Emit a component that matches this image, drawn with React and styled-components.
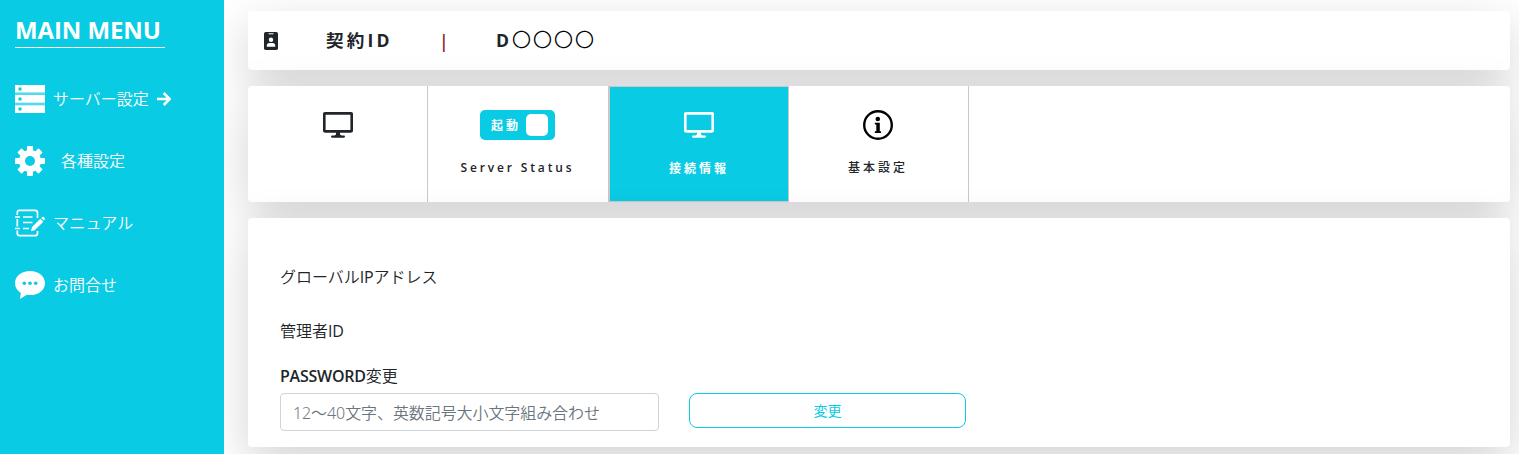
import React from "react";
import styled, { createGlobalStyle } from "styled-components";

const CYAN = "#0acbe4";
const INK = "#212529";

const GlobalStyle = createGlobalStyle`
  *, *::before, *::after { box-sizing: border-box; }
  body {
    margin: 0;
    overflow: hidden;
    background: #fff;
    color: ${INK};
    font: 400 16px/24px "Open Sans", "Noto Sans CJK JP", sans-serif;
  }
  svg { display: block; flex: none; }
`;

const Layout = styled.div`
  display: flex;
  height: 454px;
  overflow: hidden;
`;

const Sidebar = styled.nav`
  flex: none;
  width: 224px;
  padding: 13px 15px 0;
  background: ${CYAN};
  color: #fff;
`;

const MenuTitle = styled.h1`
  width: 150px;
  height: 35px;
  margin: 0 0 20px;
  border-bottom: 1px solid #fff;
  font-size: 24px;
  font-weight: 700;
  line-height: 34px;
  white-space: nowrap;
  letter-spacing: -0.1px;
`;

const MenuItem = styled.a`
  display: flex;
  align-items: center;
  height: 62px;
  white-space: nowrap;
`;

const Label = styled.span`
  display: block;
  font-weight: ${(p) => p.$weight || 350};
  letter-spacing: ${(p) => p.$tracking || 0};
  margin-left: ${(p) => p.$gap || 0};
  white-space: nowrap;
`;

const Latin = styled.span`
  font-weight: 400;
  letter-spacing: -0.2px;
`;

const Arrow = styled.svg`
  margin-left: 8px;
`;

const Main = styled.main`
  flex: 1;
  min-width: 0;
  display: flex;
  flex-direction: column;
  gap: 16px;
  padding: 11px 9px 0 24px;
  overflow: hidden;
`;

const Card = styled.section`
  flex: none;
  background: #fff;
  border-radius: 4px;
  box-shadow: 0 16px 48px rgba(0, 0, 0, 0.175);
`;

const ContractCard = styled(Card)`
  display: flex;
  align-items: center;
  height: 59px;
  padding-left: 16px;
  font-size: 17.6px;
  font-weight: 700;
`;

const ContractLabel = styled.span`
  width: 113px;
  margin: -2px 0 0 48px;
  letter-spacing: 3.2px;
`;

const Divider = styled.span`
  width: 57px;
  color: #8b1a1a;
  font-weight: 600;
`;

const ContractValue = styled.span`
  display: flex;
  align-items: center;
  margin-top: -2px;
  letter-spacing: 2px;
`;

const Rings = styled.span`
  margin: -2px 0 0 1px;
  font-family: "Noto Sans CJK JP", sans-serif;
  font-size: 19px;
  font-weight: 350;
  letter-spacing: 2px;
  color: #000;
`;

const TabsCard = styled(Card)`
  display: flex;
  height: 116px;
`;

const Tab = styled.div`
  display: flex;
  flex-direction: column;
  align-items: center;
  width: ${(p) => p.$width || 180}px;
  padding-top: ${(p) => (p.$active ? 23 : 24)}px;
  padding-right: ${(p) => p.$inset || 0}px;
  border: 0 solid #c8c8c8;
  border-width: ${(p) => (p.$active ? "1px" : "0 1px 0 0")};
  background: ${(p) => (p.$active ? CYAN : "transparent")};
  color: ${(p) => (p.$active ? "#fff" : INK)};
`;

const TabLabel = styled.span`
  margin-top: ${(p) => p.$top || 18}px;
  font-size: 12px;
  font-weight: ${(p) => p.$weight || 700};
  line-height: 20px;
  letter-spacing: ${(p) => p.$tracking || "3px"};
  white-space: nowrap;
`;

const Switch = styled.span`
  display: flex;
  align-items: center;
  justify-content: space-between;
  width: 75px;
  height: 30px;
  padding: 0 7px 0 11px;
  border-radius: 5px;
  background: ${CYAN};
  color: #fff;
  font-size: 12px;
  font-weight: 700;
  letter-spacing: 3px;
`;

const SwitchText = styled.span`
  padding-top: 1px;
`;

const Knob = styled.span`
  width: 22px;
  height: 22px;
  border-radius: 5px;
  background: #fff;
`;

const FormCard = styled(Card)`
  height: 229px;
  padding: 47px 32px 0;
`;

const Field = styled.div`
  height: ${(p) => p.$height}px;
`;

const PasswordLabel = styled.label`
  display: flex;
  height: 29px;
  font-weight: 550;
  letter-spacing: -0.25px;
`;

const Row = styled.div`
  display: flex;
  gap: 30px;
`;

const PasswordInput = styled.input`
  width: 379px;
  height: 38px;
  padding: 7px 12px 5px;
  border: 1px solid #ced4da;
  border-radius: 4px;
  background: #fff;
  font: 350 16px/24px "Noto Sans", "Noto Sans CJK JP", sans-serif;
  letter-spacing: -0.08px;
  &::placeholder { color: #6c757d; opacity: 1; }
`;

const ChangeButton = styled.button`
  width: 277px;
  height: 35px;
  padding: 0;
  border: 1px solid ${CYAN};
  border-radius: 8px;
  background: #fff;
  color: ${CYAN};
  font: 400 14px/20px "Open Sans", "Noto Sans CJK JP", sans-serif;
`;

const ServerIcon = () => (
  <svg width="30" height="28" viewBox="0 0 30 28">
    <path fill="#fff" d="M0 0h30v7.500H0zM0 10h30v7.800H0zM0 20.200h30V28H0z" />
    <path fill="#fff" opacity=".3" d="M0 7.500h30V10H0zM0 17.800h30v2.400H0z" />
    <path fill={CYAN} d="M3.500 2.500h3v3h-3zM3.500 12.500h3v3h-3zM3.500 22.500h3v3h-3z" />
  </svg>
);

const ArrowIcon = () => (
  <Arrow width="14" height="14" viewBox="0 0 14 14" fill="none" stroke="#fff" strokeWidth="2.500">
    <path d="M0 7h12.300M6.700 1l6 6-6 6" />
  </Arrow>
);

const GearIcon = () => (
  <svg width="30" height="30" viewBox="0 0 30 30">
    <g fill="#fff">
      {[0, 45, 90, 135].map((angle) => (
        <path
          key={angle}
          transform={`rotate(${angle} 15 15)`}
          d="M12.800 0h4.400q.8 0 .8.8V5l2 3v14l-2 3v4.200q0 .8-.8.8h-4.400q-.8 0-.8-.8V25l-2-3V8l2-3V.8q0-.8.8-.8z"
        />
      ))}
      <circle cx="15" cy="15" r="11" />
    </g>
    <circle cx="15" cy="15" r="5" fill={CYAN} />
  </svg>
);

const ManualIcon = () => (
  <svg width="30" height="28" viewBox="0 0 30 28" fill="none" stroke="#fff" strokeWidth="1.700">
    <path d="M2.300 6V3.500Q2.300 1.300 4.500 1.300H20q2.500 0 2.500 2.500V9M2.300 10v7.500M2.300 21.500v3q0 2.200 2.200 2.200H20q2.500 0 2.500-2.500V22" />
    <path d="M0 8h5M0 19.500h5M8 8h9.500M8 13.500h9.500M8 19.500h6" />
    <path fill="#fff" stroke="none" d="M17 18 25.300 9.800l3 3-8.600 8.400-3.700 1zM26.200 9l1-1q.8-.7 1.600 0l.9.900q.7.800 0 1.600l-.9.900z" />
  </svg>
);

const ChatIcon = () => (
  <svg width="30" height="28" viewBox="0 0 30 28">
    <path fill="#fff" d="M15 0C6.500 0 0 5.200 0 12.200c0 4.200 2.200 7.500 5.800 9.700L5 28l6.800-4.200c1 .2 2.100.3 3.200.3 8.500 0 15-5 15-11.900S23.500 0 15 0z" />
    <g fill={CYAN}>
      <circle cx="9.300" cy="12.300" r="1.800" />
      <circle cx="15" cy="12.300" r="1.800" />
      <circle cx="20.700" cy="12.300" r="1.800" />
    </g>
  </svg>
);

const BadgeIcon = () => (
  <svg width="14" height="18" viewBox="0 0 14 18">
    <rect width="14" height="18" rx="1.700" fill={INK} />
    <path d="M4.500 1.800h5" stroke="#fff" strokeWidth="1" />
    <circle cx="7" cy="7.800" r="2.200" fill="#fff" />
    <path fill="#fff" d="M2.800 14.800v-1.200q0-2.600 2.600-2.600h3.200q2.600 0 2.600 2.600v1.200z" />
  </svg>
);

const MonitorIcon = ({ color }) => (
  <svg width="30" height="30" viewBox="0 0 30 30">
    <rect x="1.250" y="3.400" width="27.500" height="18" rx="1" fill="none" stroke={color} strokeWidth="2.700" />
    <path fill={color} d="M13 22h4v2.500l1.500 1H21q1 0 1 1.100T21 27.700H9q-1 0-1-1.100t1-1.100h2.500l1.500-1z" />
  </svg>
);

const InfoIcon = () => (
  <svg width="30" height="30" viewBox="0 0 30 30">
    <circle cx="15" cy="15" r="13.800" fill="none" stroke="#000" strokeWidth="2.400" />
    <circle cx="14.800" cy="9" r="2.300" fill="#000" />
    <path d="M11.800 12.800h5v8.500H18V23h-6.200v-1.700h1.500v-6.800h-1.500z" />
  </svg>
);

export default function App() {
  return (
    <>
      <GlobalStyle />
      <Layout>
        <Sidebar>
          <MenuTitle>MAIN MENU</MenuTitle>
          <MenuItem><ServerIcon /><Label $gap="8px">サーバー設定</Label><ArrowIcon /></MenuItem>
          <MenuItem><GearIcon /><Label $gap="16px">各種設定</Label></MenuItem>
          <MenuItem><ManualIcon /><Label $gap="8px" $tracking="0.2px">マニュアル</Label></MenuItem>
          <MenuItem><ChatIcon /><Label $gap="8px">お問合せ</Label></MenuItem>
        </Sidebar>
        <Main>
          <ContractCard>
            <BadgeIcon />
            <ContractLabel>契約ID</ContractLabel>
            <Divider>|</Divider>
            <ContractValue>D<Rings>〇〇〇〇</Rings></ContractValue>
          </ContractCard>
          <TabsCard>
            <Tab><MonitorIcon color={INK} /></Tab>
            <Tab $width={181} $inset={1}>
              <Switch><SwitchText>起動</SwitchText><Knob /></Switch>
              <TabLabel $weight={600} $tracking="2.85px">Server Status</TabLabel>
            </Tab>
            <Tab $active>
              <MonitorIcon color="#fff" />
              <TabLabel $top={19}>接続情報</TabLabel>
            </Tab>
            <Tab $inset={1}>
              <InfoIcon />
              <TabLabel $weight={500}>基本設定</TabLabel>
            </Tab>
          </TabsCard>
          <FormCard>
            <Field $height={54}><Label>グローバル<Latin>IP</Latin>アドレス</Label></Field>
            <Field $height={45}><Label>管理者<Latin>ID</Latin></Label></Field>
            <PasswordLabel htmlFor="password">PASSWORD<Label>変更</Label></PasswordLabel>
            <Row>
              <PasswordInput id="password" placeholder="12～40文字、英数記号大小文字組み合わせ" />
              <ChangeButton type="button">変更</ChangeButton>
            </Row>
          </FormCard>
        </Main>
      </Layout>
    </>
  );
}
